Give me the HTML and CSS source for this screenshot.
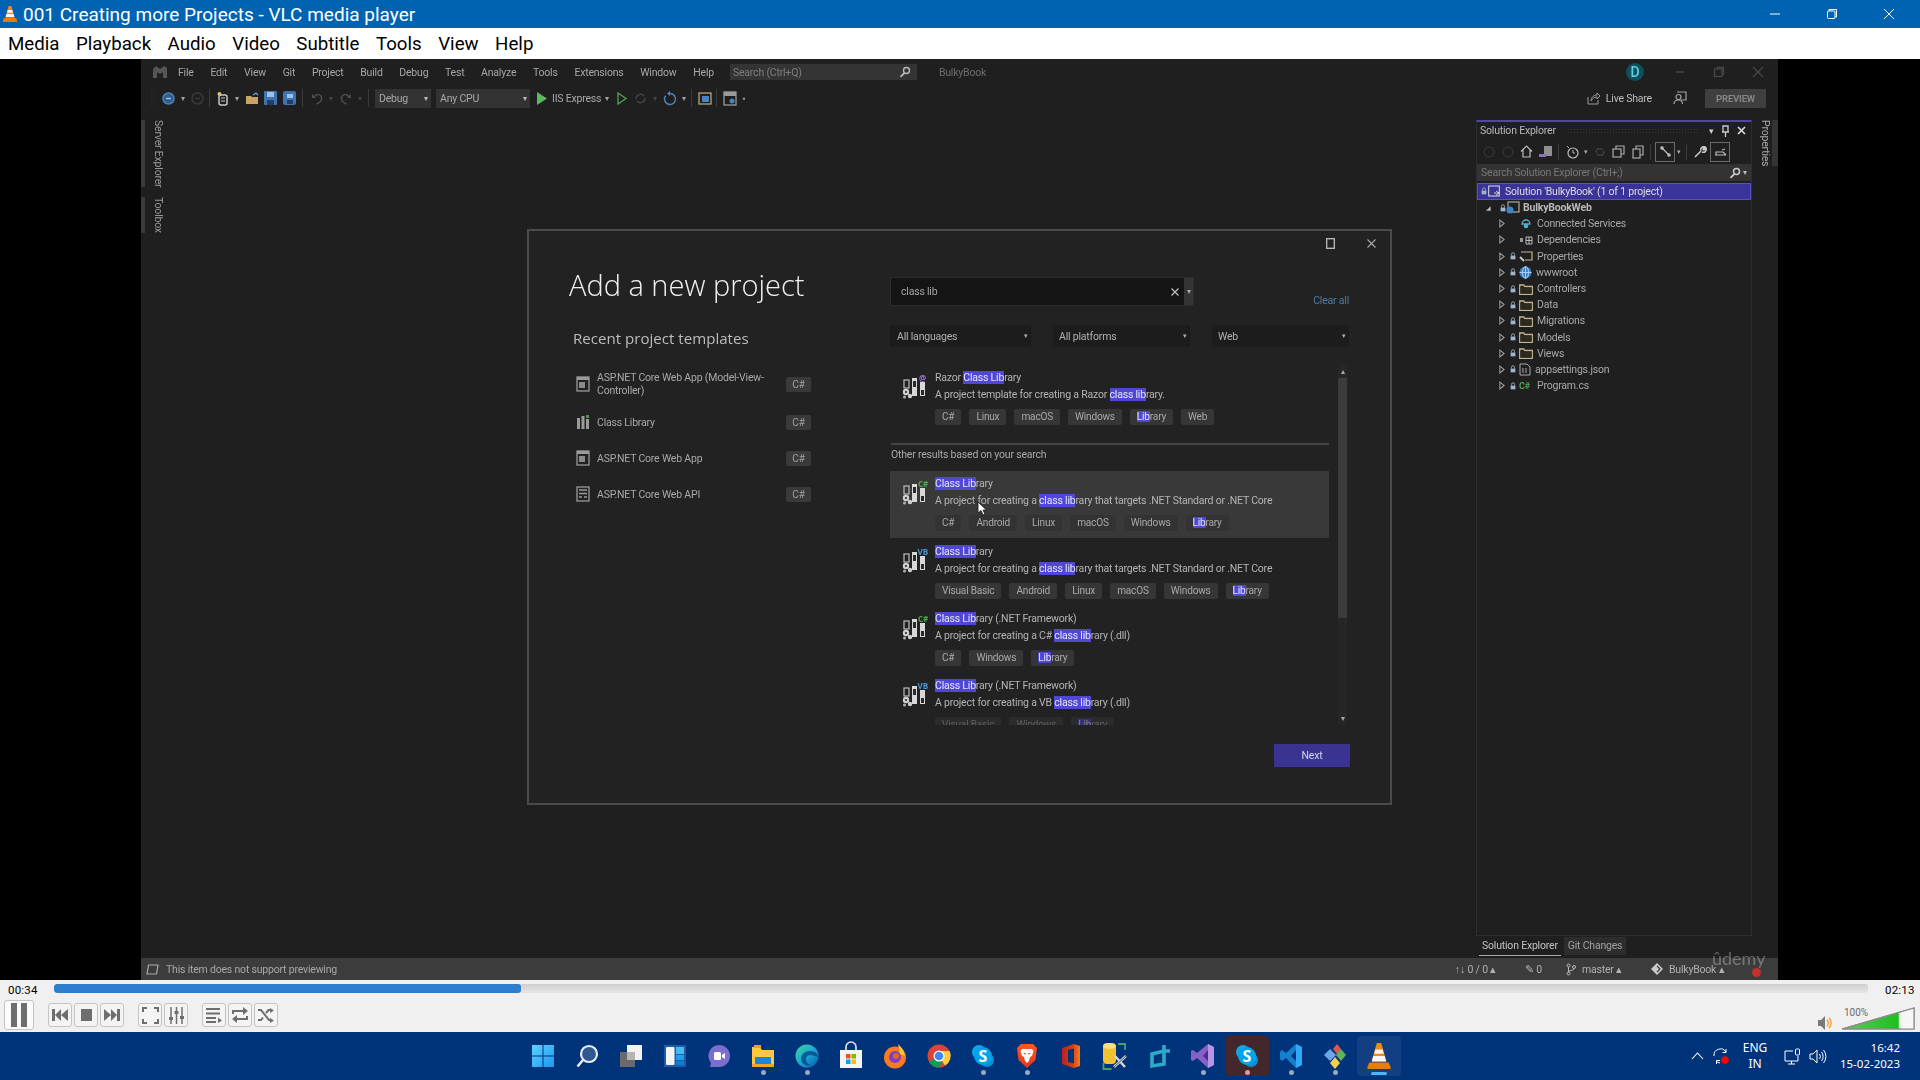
FILE: index.html
```html
<!DOCTYPE html>
<html lang="en">
<head>
<meta charset="utf-8">
<title>001 Creating more Projects - VLC media player</title>
<link rel="stylesheet" href="styles.css">
</head>
<body>
<svg class="defs" width="0" height="0" aria-hidden="true">
  <defs>
    <symbol id="proj" viewBox="0 0 26 26">
      <rect x="2" y="7" width="5" height="8" fill="none" stroke="#bdbdbd" stroke-width="1.2"/>
      <rect x="10" y="5" width="5" height="18" fill="#d8d8d8"/>
      <rect x="11" y="8" width="3" height="6" fill="#2a2a2a"/>
      <rect x="18" y="9" width="5" height="14" fill="#d8d8d8"/>
      <rect x="19" y="17" width="3" height="5" fill="#2a2a2a"/>
      <circle cx="4" cy="19" r="3.2" fill="#cfcfcf"/><circle cx="4" cy="19" r="1" fill="#222"/>
      <circle cx="8" cy="23" r="2.2" fill="#cfcfcf"/><circle cx="2.5" cy="24" r="1.5" fill="#b0b0b0"/>
    </symbol>
    <symbol id="cone" viewBox="0 0 24 26">
      <path d="M10 1h4l5 17H5z" fill="#f08a10"/>
      <path d="M8.6 7h6.8l1 4H7.600z" fill="#f6f6f6"/>
      <path d="M6.700 13h10.600l1.300 5H5.400z" fill="#f6f6f6"/>
      <path d="M3 19h18l2 5a1 1 0 0 1-1 1H2a1 1 0 0 1-1-1z" fill="#e87d0d"/>
    </symbol>
    <symbol id="lock" viewBox="0 0 7 9">
      <path d="M1.700 4V2.600a1.800 1.800 0 0 1 3.600 0V4" fill="none" stroke="#9fb4c8" stroke-width="1"/>
      <rect x=".7" y="4" width="5.600" height="4.400" fill="#9fb4c8"/>
    </symbol>
    <symbol id="folder" viewBox="0 0 14 12">
      <path d="M.7 2h4l1 1.500h7.600v7.800H.7z" fill="none" stroke="#c7b58a" stroke-width="1.300"/>
      <rect x="1.400" y="4.500" width="11.200" height="6" fill="#2c2920"/>
    </symbol>
    <symbol id="caret" viewBox="0 0 7 10">
      <path d="M1 1l5 4-5 4z" fill="none" stroke="#a0a0a0" stroke-width="1.200"/>
    </symbol>
    <symbol id="mini" viewBox="0 0 14 16">
      <rect x="1" y="1" width="12" height="14" fill="none" stroke="#9a9a9a" stroke-width="1.300"/>
      <rect x="1" y="1" width="12" height="3" fill="#9a9a9a"/>
      <rect x="3" y="6" width="6" height="6" fill="#8a8a8a"/>
    </symbol>
    <symbol id="skype" viewBox="0 0 24 24">
      <circle cx="8" cy="8" r="7" fill="#0fa7e6"/><circle cx="16" cy="16" r="7" fill="#0a8fd8"/>
      <circle cx="12" cy="12" r="9" fill="#00a4ea"/>
    </symbol>
  </defs>
</svg>

<header class="titlebar">
  <svg class="title-cone" width="16" height="18"><use href="#cone"/></svg>
  <span class="title-text">001 Creating more Projects - VLC media player</span>
  <div class="win-btns">
    <svg width="12" height="12" viewBox="0 0 12 12"><path d="M1 6h10" stroke="#fff"/></svg>
    <svg width="12" height="12" viewBox="0 0 12 12"><path d="M3 3V1.500h7.500V9H9" fill="none" stroke="#fff"/><rect x="1.500" y="3" width="7.500" height="7.500" rx="1" fill="none" stroke="#fff"/></svg>
    <svg width="12" height="12" viewBox="0 0 12 12"><path d="M1 1l10 10M11 1L1 11" stroke="#fff"/></svg>
  </div>
</header>

<nav class="menubar">
  <span>Media</span><span>Playback</span><span>Audio</span><span>Video</span><span>Subtitle</span><span>Tools</span><span>View</span><span>Help</span>
</nav>

<main class="video">
  <div class="vs">
    <div class="vs-menu">
      <svg class="vs-logo" width="16" height="16" viewBox="0 0 16 16"><path d="M1 14V5l3-3 4 3 4-3 3 2v10h-4V8L8 10 5 8v6z" fill="#555"/></svg>
      <div class="vs-items">
        <span>File</span><span>Edit</span><span>View</span><span>Git</span><span>Project</span><span>Build</span><span>Debug</span><span>Test</span><span>Analyze</span><span>Tools</span><span>Extensions</span><span>Window</span><span>Help</span>
      </div>
      <div class="vs-search">
        <span>Search (Ctrl+Q)</span>
        <svg width="12" height="12" viewBox="0 0 12 12"><circle cx="7.500" cy="4.500" r="3" fill="none" stroke="#bbb" stroke-width="1.400"/><path d="M5.500 6.800L1.500 10.800" stroke="#bbb" stroke-width="1.800"/></svg>
      </div>
      <span class="vs-sol-name">BulkyBook</span>
      <span class="vs-avatar">D</span>
      <div class="vs-winbtns">
        <svg width="12" height="12" viewBox="0 0 12 12"><path d="M2 6h8" stroke="#474747" stroke-width="1.500"/></svg>
        <svg width="12" height="12" viewBox="0 0 12 12"><path d="M4 3V1.500h6.500V8H9" fill="none" stroke="#474747" stroke-width="1.300"/><rect x="1.500" y="3" width="7.500" height="7.500" fill="none" stroke="#474747" stroke-width="1.300"/></svg>
        <svg width="12" height="12" viewBox="0 0 12 12"><path d="M1 1l10 10M11 1L1 11" stroke="#474747" stroke-width="1.300"/></svg>
      </div>
    </div>

    <div class="vs-toolbar">
      <span class="grip"></span>
      <span class="ic"><svg width="13" height="13" viewBox="0 0 13 13"><circle cx="6.500" cy="6.500" r="5.500" fill="#2c5c8f" stroke="#4a83bd" stroke-width="1.500"/><path d="M9 6.500H4" stroke="#9cc2ea" stroke-width="1.500"/></svg></span>
      <span class="dd">▾</span>
      <span class="ic"><svg width="13" height="13" viewBox="0 0 13 13"><circle cx="6.500" cy="6.500" r="5.500" fill="none" stroke="#3a3a3a" stroke-width="1.500"/><path d="M4 6.500h5" stroke="#3a3a3a" stroke-width="1.500"/></svg></span>
      <span class="sep"></span>
      <span class="ic"><svg width="14" height="15" viewBox="0 0 14 15"><rect x="3" y="4" width="8" height="10" rx="2" fill="none" stroke="#c8c8c8" stroke-width="1.500"/><circle cx="3.500" cy="3" r="2" fill="#d8c27a"/><path d="M5 7h4M5 10h4" stroke="#c8c8c8"/></svg></span>
      <span class="dd">▾</span>
      <span class="ic"><svg width="14" height="13" viewBox="0 0 14 13"><path d="M1 4h5l1 1h6v7H1z" fill="#c9a464"/><path d="M8 3l3-2 2 2" fill="none" stroke="#6aa0d8" stroke-width="1.300"/></svg></span>
      <span class="ic"><svg width="13" height="14" viewBox="0 0 13 14"><rect width="13" height="14" rx="1" fill="#3f74ae"/><rect x="3" y="1" width="7" height="5" fill="#9cc2ea"/><rect x="3" y="9" width="7" height="5" fill="#1e3f66"/></svg></span>
      <span class="ic"><svg width="13" height="14" viewBox="0 0 13 14"><rect width="13" height="14" rx="2" fill="#3f74ae"/><rect x="4" y="3" width="6" height="4" fill="#9cc2ea"/><rect x="4" y="9" width="6" height="4" fill="#1e3f66"/></svg></span>
      <span class="sep sep-w"></span>
      <span class="ic"><svg width="12" height="13" viewBox="0 0 12 13"><path d="M3 5C5 1 11 2 10.500 7c-.3 3-3 4-5 5" fill="none" stroke="#4d4d4d" stroke-width="1.500"/><path d="M1 2v4h4z" fill="#4d4d4d"/></svg></span>
      <span class="dd dim">▾</span>
      <span class="ic"><svg width="12" height="13" viewBox="0 0 12 13"><path d="M9 5C7 1 1 2 1.500 7c.3 3 3 4 5 5" fill="none" stroke="#4d4d4d" stroke-width="1.500"/><path d="M11 2v4H7z" fill="#4d4d4d"/></svg></span>
      <span class="dd dim">▾</span>
      <span class="sep sep-w"></span>
      <div class="combo combo-debug"><span>Debug</span><i>▾</i></div>
      <div class="combo combo-cpu"><span>Any CPU</span><i>▾</i></div>
      <span class="ic play"><svg width="10" height="13" viewBox="0 0 10 13"><path d="M0 0l10 6.500L0 13z" fill="#5cb85c"/></svg></span>
      <span class="iis">IIS Express</span>
      <span class="dd">▾</span>
      <span class="ic"><svg width="10" height="13" viewBox="0 0 10 13"><path d="M1 1l8 5.500L1 12z" fill="none" stroke="#4ea64e" stroke-width="1.300"/></svg></span>
      <span class="ic"><svg width="13" height="13" viewBox="0 0 13 13"><path d="M2 7a4.500 4.500 0 0 1 8-3" fill="none" stroke="#444" stroke-width="1.500"/><path d="M11 6a4.500 4.500 0 0 1-8 3" fill="none" stroke="#444" stroke-width="1.500"/></svg></span>
      <span class="dd dim">▾</span>
      <span class="ic"><svg width="13" height="15" viewBox="0 0 13 15"><path d="M7 2.500a5.500 5.500 0 1 1-4.500 2.300" fill="none" stroke="#4a83bd" stroke-width="1.500"/><path d="M7 0v5L4 2.500z" fill="#4a83bd"/></svg></span>
      <span class="dd">▾</span>
      <span class="sep"></span>
      <span class="ic"><svg width="14" height="13" viewBox="0 0 14 13"><rect x="1" y="1" width="12" height="11" fill="none" stroke="#b7a378" stroke-width="1.300"/><rect x="4" y="4" width="7" height="6" fill="#4a83bd"/></svg></span>
      <span class="sep"></span>
      <span class="ic"><svg width="14" height="15" viewBox="0 0 14 15"><rect x="1" y="1" width="12" height="13" fill="none" stroke="#9a9a9a" stroke-width="1.300"/><rect x="1" y="1" width="12" height="4" fill="#9a9a9a"/><circle cx="9" cy="10" r="2.500" fill="#4a83bd"/></svg></span>
      <span class="dd">▪</span>
      <div class="vs-tb-right">
        <svg width="13" height="13" viewBox="0 0 13 13"><path d="M1 5v7h10V8M4 9c0-4 3-6 6-6V1l3 3-3 3V5C7 5 5 7 4 9z" fill="none" stroke="#9a9a9a"/></svg>
        <span class="live">Live Share</span>
        <svg class="feedback" width="14" height="14" viewBox="0 0 14 14"><path d="M4 1h9v8H8" fill="none" stroke="#a0a0a0" stroke-width="1.200"/><circle cx="5.500" cy="6" r="2.500" fill="none" stroke="#a0a0a0" stroke-width="1.200"/><path d="M1 13c0-3 2-4 4.500-4s4 1 4 4" fill="none" stroke="#a0a0a0" stroke-width="1.200"/></svg>
        <span class="preview">PREVIEW</span>
      </div>
    </div>

    <div class="vs-main">
      <aside class="rail-left">
        <span class="rail-tab rail-tab-l">Server Explorer</span>
        <span class="rail-tab rail-tab-l">Toolbox</span>
      </aside>

      <section class="workspace">
        <div class="dialog">
          <div class="dlg-head">
            <svg width="9" height="11" viewBox="0 0 9 11"><rect x=".7" y=".7" width="7.600" height="9.600" fill="none" stroke="#bdbdbd" stroke-width="1.300"/></svg>
            <svg width="9" height="9" viewBox="0 0 9 9"><path d="M.5.500l8 8M8.500.500l-8 8" stroke="#a8a8a8" stroke-width="1.100"/></svg>
          </div>
          <div class="dlg-body">
            <div class="dlg-left">
              <h1>Add a new project</h1>
              <h2>Recent project templates</h2>
              <ul class="recent">
                <li><svg width="14" height="16"><use href="#mini"/></svg><span class="r-name">ASP.NET Core Web App (Model-View-Controller)</span><span class="badge">C#</span></li>
                <li><svg width="14" height="16" viewBox="0 0 14 16"><path d="M1 4h3v11H1zM5.500 2h3v13h-3zM10 5h3v10h-3z" fill="#9a9a9a"/><path d="M10 1h3v3h-3z" fill="#5d8c5d"/></svg><span class="r-name">Class Library</span><span class="badge">C#</span></li>
                <li><svg width="14" height="16"><use href="#mini"/></svg><span class="r-name">ASP.NET Core Web App</span><span class="badge">C#</span></li>
                <li><svg width="14" height="16" viewBox="0 0 14 16"><rect x="1" y="1" width="12" height="14" fill="none" stroke="#9a9a9a" stroke-width="1.300"/><path d="M3 4h8M3 7.500h8M3 11h3M8 11h3" stroke="#9a9a9a" stroke-width="1.500"/></svg><span class="r-name">ASP.NET Core Web API</span><span class="badge">C#</span></li>
              </ul>
            </div>
            <div class="dlg-right">
              <div class="search-row">
                <div class="search">
                  <span class="search-text">class lib</span>
                  <svg width="8" height="8" viewBox="0 0 8 8"><path d="M.5.500l7 7M7.500.500l-7 7" stroke="#c0c0c0" stroke-width="1.200"/></svg>
                  <span class="search-dd">▾</span>
                </div>
                <span class="clear">Clear all</span>
              </div>
              <div class="filters">
                <div class="filter f1"><span>All languages</span><i>▾</i></div>
                <div class="filter f2"><span>All platforms</span><i>▾</i></div>
                <div class="filter f2"><span>Web</span><i>▾</i></div>
              </div>
              <div class="results">
                <div class="list">
                  <article class="item">
                    <svg class="p-ic" width="26" height="26" viewBox="0 0 26 26"><use href="#proj" width="26" height="26"/><text x="17" y="8" class="lang lang-r">@</text></svg>
                    <div class="item-text">
                      <div class="it-title">Razor <b class="hl">Class Lib</b>rary</div>
                      <div class="it-desc">A project template for creating a Razor <b class="hl">class lib</b>rary.</div>
                      <div class="tags"><span>C#</span><span>Linux</span><span>macOS</span><span>Windows</span><span><b class="hl">Lib</b>rary</span><span>Web</span></div>
                    </div>
                  </article>
                  <div class="rule"></div>
                  <div class="other">Other results based on your search</div>
                  <article class="item selected">
                    <svg class="p-ic" width="26" height="26" viewBox="0 0 26 26"><use href="#proj" width="26" height="26"/><text x="16" y="8" class="lang lang-c">C#</text></svg>
                    <div class="item-text">
                      <div class="it-title"><b class="hl">Class Lib</b>rary</div>
                      <div class="it-desc">A project for creating a <b class="hl">class lib</b>rary that targets .NET Standard or .NET Core</div>
                      <div class="tags"><span>C#</span><span>Android</span><span>Linux</span><span>macOS</span><span>Windows</span><span><b class="hl">Lib</b>rary</span></div>
                    </div>
                    <svg class="pointer" width="10" height="15" viewBox="0 0 10 15"><path d="M1 1v11l3-2.500L6 14l2-1-2-4h3.500z" fill="#fff" stroke="#111" stroke-width=".8"/></svg>
                  </article>
                  <article class="item">
                    <svg class="p-ic" width="26" height="26" viewBox="0 0 26 26"><use href="#proj" width="26" height="26"/><text x="15.500" y="8" class="lang lang-v">VB</text></svg>
                    <div class="item-text">
                      <div class="it-title"><b class="hl">Class Lib</b>rary</div>
                      <div class="it-desc">A project for creating a <b class="hl">class lib</b>rary that targets .NET Standard or .NET Core</div>
                      <div class="tags"><span>Visual Basic</span><span>Android</span><span>Linux</span><span>macOS</span><span>Windows</span><span><b class="hl">Lib</b>rary</span></div>
                    </div>
                  </article>
                  <article class="item">
                    <svg class="p-ic" width="26" height="26" viewBox="0 0 26 26"><use href="#proj" width="26" height="26"/><text x="16" y="8" class="lang lang-c">C#</text></svg>
                    <div class="item-text">
                      <div class="it-title"><b class="hl">Class Lib</b>rary (.NET Framework)</div>
                      <div class="it-desc">A project for creating a C# <b class="hl">class lib</b>rary (.dll)</div>
                      <div class="tags"><span>C#</span><span>Windows</span><span><b class="hl">Lib</b>rary</span></div>
                    </div>
                  </article>
                  <article class="item item-cut">
                    <svg class="p-ic" width="26" height="26" viewBox="0 0 26 26"><use href="#proj" width="26" height="26"/><text x="15.500" y="8" class="lang lang-v">VB</text></svg>
                    <div class="item-text">
                      <div class="it-title"><b class="hl">Class Lib</b>rary (.NET Framework)</div>
                      <div class="it-desc">A project for creating a VB <b class="hl">class lib</b>rary (.dll)</div>
                      <div class="tags"><span>Visual Basic</span><span>Windows</span><span><b class="hl">Lib</b>rary</span></div>
                    </div>
                  </article>
                </div>
                <div class="scroll">
                  <i>▴</i><div class="thumb"></div><i class="down">▾</i>
                </div>
              </div>
              <div class="dlg-foot"><button class="next">Next</button></div>
            </div>
          </div>
        </div>
      </section>

      <aside class="solution">
        <div class="sol-panel">
          <div class="sol-title">
            <span>Solution Explorer</span>
            <span class="sol-grip"></span>
            <span class="sol-act">▾</span>
            <svg width="9" height="12" viewBox="0 0 9 12"><path d="M2 1h5v6H2zM1 7h7M4.500 7v5" fill="none" stroke="#ccc" stroke-width="1.300"/></svg>
            <svg width="9" height="9" viewBox="0 0 9 9"><path d="M1 1l7 7M8 1L1 8" stroke="#ddd" stroke-width="1.600"/></svg>
          </div>
          <div class="sol-tools">
            <span class="t"><svg width="12" height="12" viewBox="0 0 12 12"><circle cx="6" cy="6" r="5" fill="none" stroke="#3a3a3a"/></svg></span>
            <span class="t"><svg width="12" height="12" viewBox="0 0 12 12"><circle cx="6" cy="6" r="5" fill="none" stroke="#3a3a3a"/></svg></span>
            <span class="t"><svg width="13" height="13" viewBox="0 0 13 13"><path d="M1 6.500L6.500 1 12 6.500M3 5v7h7V5" fill="none" stroke="#bbb" stroke-width="1.200"/></svg></span>
            <span class="t"><svg width="14" height="13" viewBox="0 0 14 13"><rect x="5" y="1" width="8" height="10" fill="#8f8f8f"/><path d="M0 9h7v3H0z" fill="#8a6fc9"/></svg></span>
            <span class="tsep"></span>
            <span class="t"><svg width="13" height="14" viewBox="0 0 13 14"><circle cx="7" cy="8" r="5" fill="none" stroke="#bbb" stroke-width="1.200"/><path d="M7 5v3h2M1 1l2 2" stroke="#bbb"/></svg></span>
            <span class="tdd">▾</span>
            <span class="t"><svg width="12" height="12" viewBox="0 0 12 12"><path d="M2 7a4 4 0 0 1 7-3M10 5a4 4 0 0 1-7 3" fill="none" stroke="#444" stroke-width="1.300"/></svg></span>
            <span class="t"><svg width="13" height="13" viewBox="0 0 13 13"><rect x="1" y="4" width="8" height="8" fill="none" stroke="#aaa" stroke-width="1.200"/><path d="M4 4V1h8v8H9" fill="none" stroke="#aaa" stroke-width="1.200"/></svg></span>
            <span class="t"><svg width="12" height="14" viewBox="0 0 12 14"><rect x="1" y="4" width="7" height="9" fill="none" stroke="#aaa" stroke-width="1.200"/><path d="M4 4V1h7v9H8" fill="none" stroke="#aaa" stroke-width="1.200"/></svg></span>
            <span class="tsep"></span>
            <span class="t boxed"><svg width="13" height="13" viewBox="0 0 13 13"><path d="M2 2l9 9" stroke="#bbb" stroke-width="1.200"/><circle cx="3" cy="3" r="1.800" fill="#bbb"/><circle cx="10" cy="10" r="1.800" fill="#bbb"/></svg></span>
            <span class="tdd">▾</span>
            <span class="tsep"></span>
            <span class="t"><svg width="13" height="13" viewBox="0 0 13 13"><path d="M1 12l6-6M7 6a3 3 0 0 1 4-4L9 4l1 1 2-2a3 3 0 0 1-4 4" fill="none" stroke="#ccc" stroke-width="1.500"/></svg></span>
            <span class="t boxed"><svg width="13" height="9" viewBox="0 0 13 9"><path d="M1 8h11M2 8V5h7l3 3M8 3l3-1" fill="none" stroke="#bbb" stroke-width="1.200"/></svg></span>
          </div>
          <div class="sol-search"><span>Search Solution Explorer (Ctrl+;)</span><span class="sol-mag"><svg width="12" height="12" viewBox="0 0 12 12"><circle cx="7.500" cy="4.500" r="3" fill="none" stroke="#ccc" stroke-width="1.500"/><path d="M5.500 6.800L1.500 10.800" stroke="#ccc" stroke-width="1.800"/></svg> ▾</span></div>
          <div class="tree-sol"><svg class="lk" width="6" height="8"><use href="#lock"/></svg><svg width="12" height="12" viewBox="0 0 12 12"><rect x=".7" y="1" width="10.600" height="10" fill="none" stroke="#ddd"/><path d="M6 8h5M8 6l3 2-3 2" stroke="#ddd"/></svg><span>Solution 'BulkyBook' (1 of 1 project)</span></div>
          <ul class="tree">
            <li class="lvl1"><i class="tri">◢</i><svg class="lk" width="6" height="8"><use href="#lock"/></svg><svg class="ti" width="14" height="13" viewBox="0 0 14 13"><rect x="2" y="1" width="11" height="10" fill="none" stroke="#aaa" stroke-width="1.200"/><circle cx="4" cy="9" r="3.500" fill="#3f84c8"/></svg><span class="strong">BulkyBookWeb</span></li>
            <li><svg class="car" width="6" height="9"><use href="#caret"/></svg><span class="lk-gap"></span><svg class="ti" width="14" height="13" viewBox="0 0 14 13"><path d="M3 7a4 4 0 0 1 8 0H3z" fill="none" stroke="#4fb4c4" stroke-width="1.300"/><circle cx="7" cy="9" r="2.300" fill="#4fb4c4"/></svg><span>Connected Services</span></li>
            <li><svg class="car" width="6" height="9"><use href="#caret"/></svg><span class="lk-gap"></span><svg class="ti" width="14" height="12" viewBox="0 0 14 12"><path d="M7 3h6v7H7zM7 6.500h6M10 3v7" fill="none" stroke="#bbb"/><rect x="1" y="4" width="3" height="4" fill="#999"/></svg><span>Dependencies</span></li>
            <li><svg class="car" width="6" height="9"><use href="#caret"/></svg><svg class="lk" width="6" height="8"><use href="#lock"/></svg><svg class="ti" width="14" height="13" viewBox="0 0 14 13"><path d="M2 2h11v8H6" fill="none" stroke="#c7b58a" stroke-width="1.200"/><path d="M1 7l4 4" stroke="#ccc" stroke-width="1.800"/></svg><span>Properties</span></li>
            <li><svg class="car" width="6" height="9"><use href="#caret"/></svg><svg class="lk" width="6" height="8"><use href="#lock"/></svg><svg class="ti" width="13" height="13" viewBox="0 0 13 13"><circle cx="6.500" cy="6.500" r="6" fill="#3f7fc0"/><path d="M.5 6.500h12M6.500.5v12" stroke="#aacdee"/><ellipse cx="6.500" cy="6.500" rx="3" ry="6" fill="none" stroke="#aacdee"/></svg><span>wwwroot</span></li>
            <li><svg class="car" width="6" height="9"><use href="#caret"/></svg><svg class="lk" width="6" height="8"><use href="#lock"/></svg><svg class="ti" width="14" height="12"><use href="#folder"/></svg><span>Controllers</span></li>
            <li><svg class="car" width="6" height="9"><use href="#caret"/></svg><svg class="lk" width="6" height="8"><use href="#lock"/></svg><svg class="ti" width="14" height="12"><use href="#folder"/></svg><span>Data</span></li>
            <li><svg class="car" width="6" height="9"><use href="#caret"/></svg><svg class="lk" width="6" height="8"><use href="#lock"/></svg><svg class="ti" width="14" height="12"><use href="#folder"/></svg><span>Migrations</span></li>
            <li><svg class="car" width="6" height="9"><use href="#caret"/></svg><svg class="lk" width="6" height="8"><use href="#lock"/></svg><svg class="ti" width="14" height="12"><use href="#folder"/></svg><span>Models</span></li>
            <li><svg class="car" width="6" height="9"><use href="#caret"/></svg><svg class="lk" width="6" height="8"><use href="#lock"/></svg><svg class="ti" width="14" height="12"><use href="#folder"/></svg><span>Views</span></li>
            <li><svg class="car" width="6" height="9"><use href="#caret"/></svg><svg class="lk" width="6" height="8"><use href="#lock"/></svg><svg class="ti" width="12" height="13" viewBox="0 0 12 13"><path d="M1 1h7l3 3v8H1z" fill="none" stroke="#aaa"/><path d="M4 5v5M7 5v5" stroke="#aaa"/></svg><span>appsettings.json</span></li>
            <li><svg class="car" width="6" height="9"><use href="#caret"/></svg><svg class="lk" width="6" height="8"><use href="#lock"/></svg><span class="csharp">C#</span><span>Program.cs</span></li>
          </ul>
        </div>
        <div class="sol-tabs"><span class="tab-on">Solution Explorer</span><span class="tab-off">Git Changes</span></div>
      </aside>

      <aside class="rail-right"><span class="rail-tab rail-tab-r">Properties</span></aside>
    </div>

    <footer class="vs-status">
      <svg width="13" height="11" viewBox="0 0 13 11"><path d="M2.500 1H12l-1.500 9H1z" fill="none" stroke="#aaa" stroke-width="1.200"/></svg>
      <span class="st-msg">This item does not support previewing</span>
      <div class="st-right">
        <span class="st-a">↑↓ 0 / 0 ▴</span>
        <span class="st-b">✎ 0</span>
        <span class="st-c"><svg width="10" height="13" viewBox="0 0 10 13"><circle cx="2.500" cy="2.500" r="1.500" fill="none" stroke="#bbb"/><circle cx="2.500" cy="10.500" r="1.500" fill="none" stroke="#bbb"/><circle cx="8" cy="4" r="1.500" fill="none" stroke="#bbb"/><path d="M2.500 4v5M8 5.500C8 8 3 7 2.500 9" fill="none" stroke="#bbb"/></svg>master ▴</span>
        <span class="st-d"><svg width="12" height="12" viewBox="0 0 12 12"><path d="M6 0l6 6-6 6-6-6z" fill="#ccc"/><path d="M6 3l3 3-3 3" fill="none" stroke="#3c3c3c" stroke-width="1.200"/></svg>BulkyBook ▴</span>
      </div>
      <span class="udemy">ûdemy</span>
      <span class="bell"></span>
    </footer>
  </div>
</main>

<section class="controls">
  <div class="seek-row">
    <span class="time">00:34</span>
    <div class="seek"><div class="seek-fill"></div></div>
    <span class="time time-end">02:13</span>
  </div>
  <div class="btn-row">
    <button class="cb cb-big"><svg width="18" height="24" viewBox="0 0 18 24"><path d="M1 0h6v24H1zM11 0h6v24h-6z" fill="#6e6e6e"/></svg></button>
    <div class="cb-group g1">
      <button class="cb"><svg width="16" height="12" viewBox="0 0 16 12"><path d="M0 0h3v12H0zM9 0v12L3 6zM16 0v12L9 6z" fill="#6e6e6e"/></svg></button>
      <button class="cb"><svg width="11" height="12" viewBox="0 0 11 12"><rect width="11" height="12" fill="#6e6e6e"/></svg></button>
      <button class="cb"><svg width="16" height="12" viewBox="0 0 16 12"><path d="M16 0h-3v12h3zM7 0v12l6-6zM0 0v12l7-6z" fill="#6e6e6e"/></svg></button>
    </div>
    <div class="cb-group g2">
      <button class="cb"><svg width="17" height="17" viewBox="0 0 17 17"><path d="M1 5V1h4M12 1h4v4M16 12v4h-4M5 16H1v-4" fill="none" stroke="#6e6e6e" stroke-width="2"/></svg></button>
      <button class="cb"><svg width="17" height="17" viewBox="0 0 17 17"><path d="M3 0v17M8.500 0v17M14 0v17" stroke="#6e6e6e" stroke-width="1.500"/><path d="M1 10h4v3H1zM6.500 4h4v3h-4zM12 9h4v3h-4z" fill="#6e6e6e"/></svg></button>
    </div>
    <div class="cb-group g3">
      <button class="cb"><svg width="16" height="15" viewBox="0 0 16 15"><path d="M0 1h14M0 5.500h14M0 10h10M0 14h10" stroke="#6e6e6e" stroke-width="2"/><path d="M12 9.500l4 3-4 2.500z" fill="#6e6e6e"/></svg></button>
      <button class="cb"><svg width="16" height="16" viewBox="0 0 16 16"><path d="M1 7V4h11M15 9v3H4" fill="none" stroke="#6e6e6e" stroke-width="2"/><path d="M11 0l5 4-5 4zM5 8l-5 4 5 4z" fill="#6e6e6e"/></svg></button>
      <button class="cb"><svg width="16" height="15" viewBox="0 0 16 15"><path d="M0 2h3l8 10h2M0 12h3l2-2.500M8 5l2.500-3H13" fill="none" stroke="#6e6e6e" stroke-width="2"/><path d="M12 0l4 2.500L12 5zM12 10l4 2.500-4 2.500z" fill="#6e6e6e"/></svg></button>
    </div>
    <div class="volume">
      <svg width="15" height="14" viewBox="0 0 15 14"><path d="M0 4h3l4-4v14l-4-4H0z" fill="#7a7a7a"/><path d="M9 4a4 4 0 0 1 0 6M11 2a7 7 0 0 1 0 10" fill="none" stroke="#f09a1a" stroke-width="1.300"/></svg>
      <div class="vol-bar">
        <svg width="74" height="23" viewBox="0 0 74 23"><defs><linearGradient id="vg" x1="0" x2="1"><stop offset="0" stop-color="#64c864"/><stop offset=".78" stop-color="#1cc01c"/><stop offset=".8" stop-color="#e8f0e0"/></linearGradient></defs><path d="M1 22L73 1v21z" fill="url(#vg)" stroke="#8a8a8a" stroke-width="1.200"/><path d="M60 4.800L73 1v21H60z" fill="#f6f6f6" stroke="none"/><path d="M1 22L73 1v21z" fill="none" stroke="#8a8a8a" stroke-width="1.200"/></svg>
        <span class="vol-label">100%</span>
      </div>
    </div>
  </div>
</section>

<footer class="taskbar">
  <div class="tb-apps">
    <span class="app"><svg width="24" height="24" viewBox="0 0 24 24"><defs><linearGradient id="w" x1="0" y1="0" x2="1" y2="1"><stop offset="0" stop-color="#5fd2ff"/><stop offset="1" stop-color="#1b96ef"/></linearGradient></defs><path d="M1 1h10.500v10.500H1zM12.500 1H23v10.500H12.500zM1 12.500h10.500V23H1zM12.500 12.500H23V23H12.500z" fill="url(#w)"/></svg></span>
    <span class="app"><svg width="24" height="24" viewBox="0 0 24 24"><circle cx="14" cy="10" r="8" fill="#32578f" stroke="#e6eef8" stroke-width="2.200"/><path d="M8 16l-5.500 6.500" stroke="#e6eef8" stroke-width="2.500"/></svg></span>
    <span class="app"><svg width="24" height="24" viewBox="0 0 24 24"><rect x="1" y="8" width="15" height="15" fill="#6a6a6a"/><rect x="8" y="1" width="15" height="15" fill="#f2f2f2"/><rect x="8" y="8" width="8" height="8" fill="#b4b4b4"/></svg></span>
    <span class="app"><svg width="24" height="24" viewBox="0 0 24 24"><rect x="1" y="1" width="22" height="22" rx="1" fill="#1c5ea6"/><rect x="3" y="3" width="8.500" height="18" rx="1" fill="#f4f4f4"/><rect x="13" y="3" width="8" height="7" fill="#47baf2"/><rect x="13" y="11" width="8" height="5" fill="#1fa0ec"/><rect x="13" y="17" width="8" height="4" fill="#0d7fd6"/></svg></span>
    <span class="app"><svg width="24" height="24" viewBox="0 0 24 24"><path d="M12 1a11 11 0 0 1 0 22H3l1-4A11 11 0 0 1 12 1z" fill="#7a6fd0"/><rect x="7" y="8" width="7" height="8" rx="1.500" fill="#fff"/><path d="M15 11l3-2v6l-3-2z" fill="#fff"/></svg></span>
    <span class="app dot"><svg width="24" height="24" viewBox="0 0 24 24"><path d="M1 3h8l2 3h12v16H1z" fill="#ffc83d"/><path d="M3 1h7v3H3z" fill="#e8a61e"/><rect x="4" y="13" width="16" height="9" fill="#1f86d6"/><rect x="1" y="20" width="22" height="3" fill="#eca81e"/></svg></span>
    <span class="app dot"><svg width="24" height="24" viewBox="0 0 24 24"><defs><linearGradient id="e" x1="0" y1="0" x2="1" y2="1"><stop offset="0" stop-color="#44d88c"/><stop offset=".5" stop-color="#1aa7d8"/><stop offset="1" stop-color="#0c59a4"/></linearGradient></defs><circle cx="12" cy="12" r="11.500" fill="url(#e)"/><path d="M23 13c0-4-4-6-8-6-6 0-9 4-9 8s5 8 11 6c-3 0-6-2-6-6 0-3 3-4 5-4s4 1 7 2z" fill="#00337a" opacity=".65"/></svg></span>
    <span class="app"><svg width="24" height="26" viewBox="0 0 24 26"><path d="M7 8V4a5 5 0 0 1 10 0v4" fill="none" stroke="#e8e8e8" stroke-width="1.600"/><rect x="1" y="7" width="22" height="18" fill="#f4f4f4"/><rect x="7" y="11" width="4.500" height="4.500" fill="#f25022"/><rect x="12.500" y="11" width="4.500" height="4.500" fill="#7fba00"/><rect x="7" y="16.500" width="4.500" height="4.500" fill="#00a4ef"/><rect x="12.500" y="16.500" width="4.500" height="4.500" fill="#ffb900"/></svg></span>
    <span class="app"><svg width="24" height="26" viewBox="0 0 24 26"><circle cx="12" cy="14.500" r="11" fill="#ff7a1e"/><path d="M15 1c4 4 6 6 7 12l-5-2z" fill="#ffc53a"/><circle cx="12" cy="14" r="6" fill="#7a3fc4"/><circle cx="13" cy="13" r="3" fill="#e8622a"/></svg></span>
    <span class="app"><svg width="24" height="24" viewBox="0 0 24 24"><circle cx="12" cy="12" r="11.500" fill="#db4437"/><path d="M12 12L2 18a11.500 11.500 0 0 0 10 5.500l6-10z" fill="#0f9d58"/><path d="M12 7h10.700a11.500 11.500 0 0 1-4.700 14.500L12 12z" fill="#ffcd40"/><circle cx="12" cy="12" r="5.500" fill="#fff"/><circle cx="12" cy="12" r="4.300" fill="#4285f4"/></svg></span>
    <span class="app dot"><svg width="24" height="24" viewBox="0 0 24 24"><use href="#skype"/></svg><span class="s-letter">S</span></span>
    <span class="app dot"><svg width="22" height="26" viewBox="0 0 22 26"><defs><linearGradient id="br" x1="0" y1="0" x2="0" y2="1"><stop offset="0" stop-color="#ff5a1f"/><stop offset="1" stop-color="#e8341c"/></linearGradient></defs><path d="M5 1h12l4 4-1.500 12L11 25 2.500 17 1 5z" fill="url(#br)"/><path d="M6 6h10l1.500 2-1.500 5-2 1-1 4-2 2-2-2-1-4-2-1-1.500-5z" fill="#fff"/><path d="M7.500 9.500l2.500 1v1l-2-.5zM14.500 9.500l-2.500 1v1l2-.5z" fill="#f0441c"/></svg></span>
    <span class="app"><svg width="22" height="26" viewBox="0 0 22 26"><defs><linearGradient id="of" x1="0" x2="1"><stop offset="0" stop-color="#b5232c"/><stop offset=".55" stop-color="#d83b01"/><stop offset="1" stop-color="#f07a2a"/></linearGradient></defs><path fill-rule="evenodd" d="M2 5l12-4 6 2v20l-6 2-12-4zM8 7v12l6 1.500V5.500z" fill="url(#of)"/></svg></span>
    <span class="app"><svg width="26" height="28" viewBox="0 0 26 28"><rect x="1" y="1" width="13" height="21" rx="4" fill="#f2c230"/><ellipse cx="7.500" cy="4" rx="6.500" ry="3" fill="#f8e08a"/><path d="M16 2h7v6M1.500 21v6h8" fill="none" stroke="#3fa56a" stroke-width="1.800"/><path d="M12 25l12-11M13 14l10 11" stroke="#d8d8d8" stroke-width="2.400"/><path d="M12 25l12-11" stroke="#333" stroke-width=".8"/></svg></span>
    <span class="app"><svg width="24" height="26" viewBox="0 0 24 26"><path d="M17 2v19L5 23V11l12-3h6" fill="none" stroke="#2ea9c9" stroke-width="3.600"/></svg></span>
    <span class="app dot"><svg width="24" height="26" viewBox="0 0 24 26"><path d="M17 1l6 3v18l-6 3L6 15l-4 3-2-1V8l2-1 4 3z" fill="#8661c5"/><path d="M17 1l6 3v18l-6 3z" fill="#b794e8"/><path d="M17 7l-5 6 5 5z" fill="#4e2d8a"/></svg></span>
    <span class="app app-active dot dot-pink"><svg width="24" height="24" viewBox="0 0 24 24"><use href="#skype"/></svg><span class="s-letter">S</span></span>
    <span class="app dot"><svg width="24" height="26" viewBox="0 0 24 26"><path d="M17 1l6 3v18l-6 3L7 15l-4 3-2-2V9l2-2 4 3z" fill="#1680d0"/><path d="M17 1l6 3v18l-6 3z" fill="#2fa8f5"/><path d="M17 7l-5 6 5 5z" fill="#00337a"/></svg></span>
    <span class="app dot"><svg width="24" height="28" viewBox="0 0 24 28"><path d="M14 2l4 5-4 5-4-5z" fill="#e2574c"/><path d="M7 7l6 6-6 6-6-6z" fill="#6ea5e8"/><path d="M18 7l5 6-5 6-5-6z" fill="#5fb35a"/><path d="M12 15l5 6-5 6-5-6z" fill="#f2d14a"/></svg></span>
    <span class="app app-vlc"><svg width="26" height="28"><use href="#cone"/></svg><span class="vlc-bar"></span></span>
  </div>
  <div class="tray">
    <span class="tr tr-chev"><svg width="13" height="8" viewBox="0 0 13 8"><path d="M1 7l5.500-6L12 7" fill="none" stroke="#fff" stroke-width="1.100"/></svg></span>
    <span class="tr tr-sync"><svg width="17" height="17" viewBox="0 0 17 17"><path d="M1 8a6.500 6.500 0 0 1 12-4M13 1v3.500H9.500M3.500 16v-3.500H7M3 13a6 6 0 0 0 4 2" fill="none" stroke="#fff" stroke-width="1"/><circle cx="12" cy="12" r="3.800" fill="#f00"/></svg></span>
    <span class="tr tr-lang">ENG<br>IN</span>
    <span class="tr tr-net"><svg width="17" height="17" viewBox="0 0 17 17"><path d="M9 3H1v10h13V8M4 16h7M7.500 13v3" fill="none" stroke="#fff" stroke-width="1"/><rect x="11.500" y="1" width="4" height="6" rx="1" fill="none" stroke="#fff"/></svg></span>
    <span class="tr tr-spk"><svg width="17" height="15" viewBox="0 0 17 15"><path d="M1 5h3l4-4v13l-4-4H1z" fill="none" stroke="#fff"/><path d="M10.500 5a4 4 0 0 1 0 5M12.500 3a7 7 0 0 1 0 9M14.500 1a10 10 0 0 1 0 13" fill="none" stroke="#fff"/></svg></span>
    <div class="clock"><span>16:42</span><span>15-02-2023</span></div>
  </div>
</footer>
</body>
</html>
```
FILE: styles.css
```css
* { box-sizing: border-box; }
html, body { margin: 0; padding: 0; width: 1920px; height: 1080px; overflow: hidden; }
body { display: flex; flex-direction: column; font-family: "Roboto", "Liberation Sans", sans-serif; background: #000; }
.defs { position: absolute; }
ul { list-style: none; margin: 0; padding: 0; }
h1, h2 { margin: 0; font-weight: 400; }
button { font-family: inherit; padding: 0; border: 0; }
svg { overflow: visible; }

/* window chrome */
.titlebar { height: 28px; flex: none; background: #0063b1; color: #fff; display: flex; align-items: center; padding-left: 2px; }
.title-text { font-size: 19px; margin-left: 5px; white-space: nowrap; }
.title-cone { flex: none; }
.win-btns { margin-left: auto; display: flex; gap: 45px; padding-right: 25px; align-items: center; }
.menubar { height: 31px; flex: none; background: #fff; color: #000; display: flex; align-items: center; padding-left: 8px; gap: 16.500px; font-size: 18.700px; }

/* video */
.video { flex: 1; background: #000; display: flex; min-height: 0; padding-left: 141px; }
.vs { width: 1637px; background: #1f1f1f; display: flex; flex-direction: column; color: #b8b8b8; font-family: "Roboto", "Liberation Sans", sans-serif; font-size: 10.500px; letter-spacing: -.2px; filter: blur(.55px); }
.vs-menu { height: 26px; flex: none; display: flex; align-items: center; padding: 0 14px 0 11px; }
.vs-logo { flex: none; }
.vs-items { display: flex; gap: 16.700px; margin-left: 10px; color: #a6a6a6; }
.vs-search { margin-left: 16px; width: 187px; height: 16px; background: #343434; display: flex; align-items: center; justify-content: space-between; padding: 0 6px 0 3px; color: #7d7d7d; }
.vs-sol-name { margin-left: 22px; color: #6d6d6d; }
.vs-avatar { margin-left: auto; width: 18px; height: 18px; border-radius: 50%; background: #0f4f5e; color: #5fd0e0; display: flex; align-items: center; justify-content: center; font-size: 14px; font-weight: 500; }
.vs-winbtns { margin-left: 30px; display: flex; gap: 27px; }

.vs-toolbar { height: 26px; flex: none; display: flex; align-items: center; padding-left: 9px; }
.grip { width: 5px; height: 18px; margin-right: 4px; flex: none; background-image: radial-gradient(#3a3a3a 40%, transparent 45%); background-size: 2.500px 2.500px; }
.ic { width: 19px; flex: none; display: flex; align-items: center; justify-content: center; }
.dd { width: 10px; flex: none; text-align: center; font-size: 8px; color: #a0a0a0; }
.dd.dim { color: #444; }
.sep { width: 6px; height: 18px; flex: none; background: linear-gradient(90deg, transparent 2px, #3a3a3a 2px, #3a3a3a 3px, transparent 3px); }
.sep-w { width: 8px; background: linear-gradient(90deg, transparent 3px, #3a3a3a 3px, #3a3a3a 4px, transparent 4px); }
.combo { height: 19px; background: #333; display: flex; align-items: center; justify-content: space-between; padding: 0 3px 0 4px; color: #a8a8a8; font-style: normal; flex: none; }
.combo i { font-style: normal; font-size: 8px; color: #bbb; }
.combo-debug { width: 56px; margin-left: 2px; }
.combo-cpu { width: 94px; margin-left: 5px; }
.play { margin-left: 2px; }
.iis { margin-left: 1px; width: 50px; white-space: nowrap; color: #a8a8a8; }
.vs-tb-right { margin-left: auto; display: flex; align-items: center; padding-right: 12px; }
.live { margin-left: 6px; color: #bdbdbd; }
.feedback { margin-left: 21px; }
.preview { margin-left: 18px; width: 61px; height: 19px; background: #3f3f3f; color: #858585; font-weight: 700; font-size: 9.500px; display: flex; align-items: center; justify-content: center; }

.vs-main { flex: 1; display: flex; min-height: 0; }
.rail-left { width: 24px; flex: none; padding-top: 9px; display: flex; flex-direction: column; gap: 10px; }
.rail-tab { writing-mode: vertical-rl; font-size: 10.500px; color: #9a9a9a; white-space: nowrap; }
.rail-tab-l { border-left: 4px solid #3a3a3a; padding-left: 2px; }
.workspace { flex: 1; padding: 118px 0 0 362px; min-width: 0; }
.rail-right { width: 26px; flex: none; padding-top: 9px; display: flex; }
.rail-tab-r { border-right: 6px solid #343434; padding-left: 5px; width: 26px; height: 46px; color: #a8a8a8; }

/* dialog */
.dialog { width: 865px; height: 576px; background: #222; border: 2px solid #4a4a4a; display: flex; flex-direction: column; }
.dlg-head { height: 25px; flex: none; display: flex; align-items: center; justify-content: flex-end; gap: 32px; padding-right: 14px; }
.dlg-body { flex: 1; display: flex; min-height: 0; }
.dlg-left { width: 361px; flex: none; padding-left: 40px; }
.dlg-left h1 { margin-top: 8px; height: 42px; line-height: 42px; font-size: 29px; color: #f0f0f0; white-space: nowrap; font-weight: 300; letter-spacing: 0; font-family: "Open Sans", sans-serif; }
.dlg-left h2 { margin: 20px 0 0 4px; height: 24px; line-height: 24px; font-size: 15.100px; color: #bcbcbc; white-space: nowrap; letter-spacing: 0; font-family: "Open Sans", sans-serif; }
.recent { margin-top: 14px; width: 242px; }
.recent li { min-height: 36px; display: flex; align-items: center; padding-left: 7px; gap: 7px; }
.recent li:first-child { min-height: 40px; }
.recent svg { flex: none; }
.r-name { flex: 1; font-size: 10.500px; line-height: 13px; color: #a8a8a8; }
.badge { flex: none; width: 25px; height: 15px; background: #3a3a3a; border-radius: 2px; display: flex; align-items: center; justify-content: center; color: #a0a0a0; font-size: 10px; }

.dlg-right { width: 460px; flex: none; padding-top: 21px; }
.search-row { display: flex; align-items: flex-end; justify-content: space-between; height: 29px; }
.search { width: 304px; height: 29px; background: #141414; border: 1px solid #2c2c2c; display: flex; align-items: center; padding-left: 10px; color: #a8a8a8; }
.search-text { flex: 1; }
.search-dd { width: 9px; height: 100%; margin-left: 5px; background: #343434; font-size: 8px; display: flex; align-items: center; justify-content: center; }
.clear { color: #4e7aa6; margin-bottom: -1px; padding-right: 1px; }
.filters { display: flex; gap: 22px; margin-top: 19px; }
.filter { width: 137px; height: 22px; background: #1c1c1c; display: flex; align-items: center; justify-content: space-between; padding: 0 3px 0 6px; color: #b0b0b0; }
.f1 { width: 141px; padding-left: 7px; }
.filter i { font-style: normal; font-size: 7px; }
.results { display: flex; margin-top: 18px; height: 360px; }
.list { width: 439px; flex: none; overflow: hidden; }
.item { height: 67px; display: flex; padding: 5px 0 0 12px; gap: 7px; position: relative; }
.item.selected { background: #393939; margin-bottom: 1px; }
.item-cut { height: 60px; overflow: hidden; }
.p-ic { flex: none; margin-top: 3px; }
.lang { font: 700 8px "Open Sans", sans-serif; letter-spacing: 0; }
.lang-c { fill: #4fa64f; }
.lang-v { fill: #4a94d8; }
.lang-r { fill: #9a6ed8; }
.item-text { min-width: 0; white-space: nowrap; color: #b4b4b4; }
.it-title { height: 16px; line-height: 16px; }
.it-desc { height: 17px; line-height: 17px; }
.hl { font-weight: 400; background: #5047d6; color: #e6e6f8; }
.tags { display: flex; gap: 8px; margin-top: 6px; height: 16px; }
.tags span { background: #363636; border-radius: 2px; padding: 0 7px; line-height: 16px; font-size: 10.100px; color: #a8a8a8; }
.selected .tags span { background: #333; }
.item-cut .tags { opacity: .45; }
.pointer { position: absolute; left: 87px; top: 30px; }
.rule { height: 2px; background: #444; margin: 11px 0 0 1px; }
.other { height: 17px; line-height: 18px; margin: 1px 0 8px 1px; color: #a8a8a8; white-space: nowrap; }
.scroll { width: 9px; margin-left: 9px; display: flex; flex-direction: column; align-items: center; color: #a8a8a8; font-size: 8px; line-height: 13px; background: #262626; }
.scroll i { font-style: normal; height: 13px; }
.thumb { width: 9px; height: 240px; background: #3c3c3c; }
.scroll .down { margin-top: auto; }
.dlg-foot { margin-top: 19px; display: flex; justify-content: flex-end; }
.next { width: 76px; height: 23px; background: #3a3391; color: #d6d6e8; font-size: 10.500px; letter-spacing: -.2px; }

/* solution explorer */
.solution { width: 276px; flex: none; padding-top: 9px; display: flex; flex-direction: column; }
.sol-panel { height: 816px; flex: none; border: 1px solid #2e2e2e; border-top: 2px solid #4e46a8; }
.sol-title { height: 17px; display: flex; align-items: center; gap: 7px; padding: 0 5px 0 3px; color: #b8b8b8; }
.sol-grip { flex: 1; height: 5px; margin: 0 4px; background-image: radial-gradient(#3a3a3a 40%, transparent 45%); background-size: 3px 3px; }
.sol-act { font-size: 9px; color: #ccc; }
.sol-tools { height: 25px; display: flex; align-items: center; padding-left: 2px; }
.t { width: 19px; height: 18px; flex: none; display: flex; align-items: center; justify-content: center; }
.tsep { width: 8px; height: 16px; flex: none; background: linear-gradient(90deg, transparent 3px, #3a3a3a 3px, #3a3a3a 4px, transparent 4px); }
.tdd { width: 8px; flex: none; font-size: 7px; color: #aaa; text-align: center; }
.boxed { width: 20px; height: 20px; border: 1px solid #6a6a6a; }
.sol-search { height: 17px; background: #333; display: flex; align-items: center; justify-content: space-between; padding: 0 4px; color: #777; }
.sol-mag { display: flex; align-items: center; gap: 2px; color: #bbb; font-size: 8px; }
.tree-sol { height: 16.500px; margin-top: 2px; background: #3a3399; border: 1px solid #5a52c4; display: flex; align-items: center; padding-left: 3px; color: #dcdcdc; }
.tree-sol .lk { margin: 0 1px 0 0; }
.tree-sol span { margin-left: 5px; white-space: nowrap; }
.tree li { height: 16.200px; display: flex; align-items: center; padding-left: 22px; color: #a8a8a8; white-space: nowrap; }
.tree li.lvl1 { padding-left: 9px; }
.tri { font-style: normal; font-size: 6px; width: 9px; color: #bbb; }
.car { flex: none; }
.lk { flex: none; margin-left: 5px; }
.lk-gap { width: 11px; flex: none; }
.ti { flex: none; margin: 0 4px 0 3px; }
.lvl1 .ti { margin: 0 3px 0 0; }
.strong { color: #b8b8b8; font-weight: 700; font-size: 10.500px; }
.csharp { width: 14px; margin: 0 4px 0 3px; color: #4fa64f; font-weight: 700; font-size: 9px; flex: none; }
.sol-tabs { height: 19px; flex: none; display: flex; margin-top: 1px; padding-left: 1px; gap: 2px; }
.tab-on { padding: 0 3px; color: #c0c0c0; border-bottom: 1px solid #aaa; line-height: 17px; margin-left: 2px; }
.tab-off { padding: 0 4px; background: #2d2d2d; color: #a0a0a0; line-height: 17px; margin-left: 1px; height: 18px; }

/* status bar */
.vs-status { height: 22px; flex: none; background: #3c3c3c; display: flex; align-items: center; padding-left: 5px; position: relative; color: #a8a8a8; }
.st-msg { margin-left: 7px; }
.st-right { margin-left: auto; display: flex; align-items: center; padding-right: 52px; color: #b0b0b0; white-space: nowrap; }
.st-a { width: 70px; }
.st-b { width: 41px; }
.st-c { width: 85px; display: flex; align-items: center; gap: 6px; }
.st-d { width: 75px; display: flex; align-items: center; gap: 6px; }
.udemy { position: absolute; left: 1571px; top: -11px; font-size: 18px; letter-spacing: 0; color: rgba(255,255,255,.3); font-family: "Lato", sans-serif; }
.bell { position: absolute; left: 1611px; top: 10px; width: 9px; height: 9px; border-radius: 50%; background: #c23030; }

/* controls */
.controls { height: 52px; flex: none; background: #f0f0f0; display: flex; flex-direction: column; color: #000; }
.seek-row { height: 20px; display: flex; align-items: center; padding-left: 8px; font-size: 11.500px; flex: none; }
.time { width: 46px; flex: none; letter-spacing: .2px; }
.time-end { width: auto; margin-left: 17px; }
.seek { width: 1814px; height: 9px; border-radius: 3px; background: linear-gradient(#cfcfcf, #d8d8d8 40%, #e6e6e6); flex: none; overflow: hidden; margin-top: -4px; }
.seek-fill { width: 467px; height: 100%; background: #2d7ecd; border-radius: 3px; }
.btn-row { flex: 1; display: flex; align-items: flex-start; padding-left: 4px; }
.cb { width: 24px; height: 24px; margin-top: 3px; border: 1px solid #c4c4c4; border-radius: 3px; background: #f4f4f4; display: flex; align-items: center; justify-content: center; flex: none; }
.cb-big { width: 30px; height: 30px; margin-top: 0; background: #fbfbfb; }
.cb-big svg { height: 24px; }
.cb-group { display: flex; gap: 2px; }
.g1, .g2, .g3 { margin-left: 14px; }
.volume { margin-left: auto; padding-right: 5px; display: flex; align-items: flex-end; gap: 8px; height: 30px; }
.vol-bar { position: relative; width: 74px; height: 23px; }
.vol-bar svg { display: block; }
.vol-label { position: absolute; left: 3px; top: 0; font-size: 10px; color: #6a6a6a; }

/* taskbar */
.taskbar { height: 48px; flex: none; background: #00337a; display: flex; align-items: center; padding-left: 521px; color: #fff; }
.tb-apps { display: flex; align-items: center; }
.app { width: 44px; height: 40px; display: flex; align-items: center; justify-content: center; position: relative; border-radius: 4px; flex: none; }
.app svg { max-height: 28px; }
.dot::after { content: ""; position: absolute; left: 20px; bottom: 1px; width: 5px; height: 5px; border-radius: 50%; background: #9aa8bc; }
.dot-pink::after { background: #f4919a; }
.app-active { background: #43272b; }
.app-vlc { background: #123f82; }
.vlc-bar { position: absolute; left: 14px; bottom: 1px; width: 16px; height: 3px; border-radius: 2px; background: #4fb4f4; }
.s-letter { position: absolute; left: 0; right: 0; top: 9px; text-align: center; font: 700 16px "Open Sans", sans-serif; color: #fff; }
.tray { margin-left: auto; display: flex; align-items: center; padding-right: 20px; }
.tr { display: flex; align-items: center; justify-content: center; flex: none; }
.tr-chev, .tr-sync, .tr-spk { width: 24px; }
.tr-lang { width: 44px; font-size: 12px; line-height: 16px; text-align: center; display: block; font-family: "Noto Sans", sans-serif; }
.tr-net { width: 26px; margin-left: 2px; }
.clock { margin-left: 11px; width: 60px; display: flex; flex-direction: column; align-items: flex-end; font-size: 11.500px; line-height: 16px; white-space: nowrap; font-family: "Noto Sans", sans-serif; }
```
